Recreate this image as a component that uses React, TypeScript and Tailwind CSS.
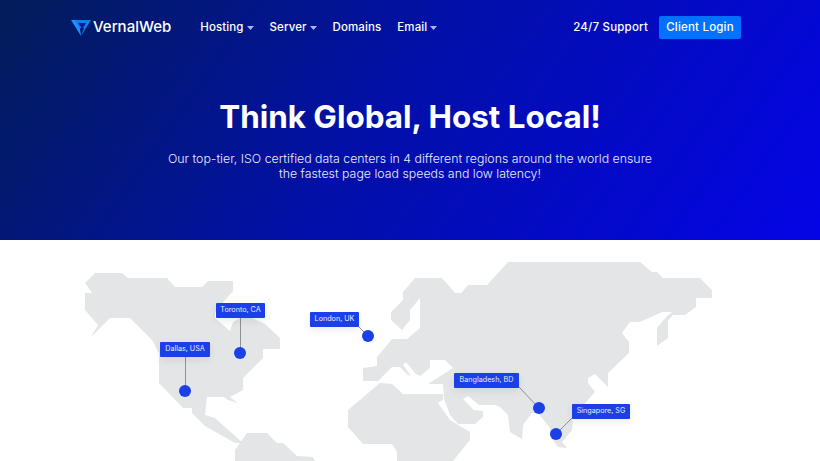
import React from 'react';

const navItems = [
  { label: 'Hosting', caret: true },
  { label: 'Server', caret: true },
  { label: 'Domains', caret: false },
  { label: 'Email', caret: true },
];

const pins = [
  { label: 'Toronto, CA', box: 'left-[216px] top-[63px] w-[49px]', dot: 'left-[234px] top-[107px]' },
  { label: 'Dallas, USA', box: 'left-[160px] top-[102px] w-[50px]', dot: 'left-[179px] top-[145px]' },
  { label: 'London, UK', box: 'left-[310px] top-[72px] w-[49px]', dot: 'left-[362px] top-[90px]' },
  { label: 'Bangladesh, BD', box: 'left-[454px] top-[133px] w-[65px]', dot: 'left-[533px] top-[162px]' },
  { label: 'Singapore, SG', box: 'left-[572px] top-[164px] w-[58px]', dot: 'left-[550px] top-[188px]' },
];

const lines = [
  [240.5, 318, 240.5, 350],
  [185.5, 357, 185.5, 388],
  [358, 326, 366, 334],
  [519, 387, 537, 406],
  [572, 418, 558, 432],
];

const land = [
  // north america
  '85,283 95,273 122,273 128,278 167,278 175,287 202,287 208,281 233,281 233,291 215,312 215,318 230,331 233,322 240,318 252,318 265,324 280,338 280,349 263,349 263,358 243,378 243,390 230,397 238,403 228,400 224,397 207,397 205,415 215,418 243,443 235,443 205,426 192,413 192,408 183,408 159,383 159,353 152,340 130,318 110,318 91,337 98,325 85,310 85,293 92,293',
  // south america
  '235,461 235,450 247,433 267,433 277,443 283,443 297,456 313,457 315,461',
  // africa
  '348,410 380,383 392,384 403,394 443,394 443,400 438,403 450,420 470,432 470,440 453,461 397,461 397,452 392,444 363,444 348,427',
  // eurasia
  '363,368 377,366 377,357 392,339 407,339 420,328 420,298 410,310 410,320 402,330 391,320 391,312 403,300 403,292 415,278 442,278 455,293 461,293 468,285 487,285 508,262 640,262 652,272 657,272 663,278 700,278 712,290 712,298 696,298 696,307 685,315 673,315 668,321 668,338 657,346 657,328 667,316 672,312 662,312 640,322 630,322 622,333 629,342 629,353 608,373 608,387 595,374 588,378 588,383 595,392 573,417 572,430 562,442 567,448 558,447 550,436 550,428 538,413 532,413 523,425 522,439 510,432 508,415 500,407 495,405 479,405 468,396 463,399 474,410 483,411 483,417 475,424 458,424 450,415 444,399 443,384 428,384 453,368 445,360 430,360 430,368 420,376 416,374 406,362 403,365 411,376 408,375 400,367 392,367 378,381 363,381',
];

export default function App() {
  return (
    <div className="h-[461px] w-full overflow-hidden bg-white font-['Inter',sans-serif]">
      <section className="h-[240px] bg-linear-[125deg] from-[#021d58] via-[#0310a6] via-45% to-[#0404e6] text-white">
        <header className="flex h-[55px] items-center justify-between px-[71px] pr-[79px]">
          <div className="flex items-center">
            <a className="mr-[29px] flex items-center gap-[2px] text-[15px] font-medium">
              <svg width="20" height="16" viewBox="0 0 20 16">
                <path d="M0 0H6L10 6L9 9L10 16Z" fill="#1e90ff" />
                <path d="M4 0H20L10 16L13 8H8Z" fill="#1a78f0" />
                <path d="M7 3H15L11.5 9Z" fill="#0a1f8f" />
              </svg>
              VernalWeb
            </a>
            <nav className="flex items-center gap-[16px] text-[11.5px] font-medium tracking-[0.1px]">
              {navItems.map((item) => (
                <a key={item.label} className="flex items-center gap-[3px]">
                  {item.label}
                  {item.caret && (
                    <svg width="7" height="4" viewBox="0 0 7 4">
                      <path d="M0 0H7L3.5 4Z" fill="#a8b4ea" />
                    </svg>
                  )}
                </a>
              ))}
            </nav>
          </div>
          <div className="flex items-center gap-[11px] text-[11.5px] font-medium tracking-[0.2px]">
            <a>24/7 Support</a>
            <a className="flex h-[23px] w-[82px] items-center justify-center rounded-[2px] bg-[#0072ff]">Client Login</a>
          </div>
        </header>
        <div className="pt-[41px] text-center">
          <h1 className="text-[31.4px] leading-[42px] font-bold">Think Global, Host Local!</h1>
          <p className="mx-auto mt-[13px] w-[500px] text-[12.35px] leading-[15px] font-light text-[#ececfc]">
            Our top-tier, ISO certified data centers in 4 different regions around the world ensure the fastest page load speeds and low latency!
          </p>
        </div>
      </section>
      <section className="relative h-[221px] overflow-hidden">
        <svg className="absolute inset-0" width="820" height="221" viewBox="0 240 820 221">
          {land.map((points) => (
            <polygon key={points.slice(0, 12)} points={points} fill="#e3e5e7" />
          ))}
          {lines.map(([x1, y1, x2, y2]) => (
            <line key={x1} x1={x1} y1={y1} x2={x2} y2={y2} stroke="#8d9196" strokeWidth="1" />
          ))}
        </svg>
        {pins.map((pin) => (
          <React.Fragment key={pin.label}>
            <div className={`absolute flex h-[15px] items-center justify-center rounded-[1px] bg-[#1b3fe8] text-[7.2px] whitespace-nowrap text-[#e8edff] shadow-[0_3px_8px_rgba(0,0,0,0.08)] ${pin.box}`}>
              {pin.label}
            </div>
            <div className={`absolute h-[12px] w-[12px] rounded-full bg-[#1b3fe8] ${pin.dot}`} />
          </React.Fragment>
        ))}
      </section>
    </div>
  );
}
